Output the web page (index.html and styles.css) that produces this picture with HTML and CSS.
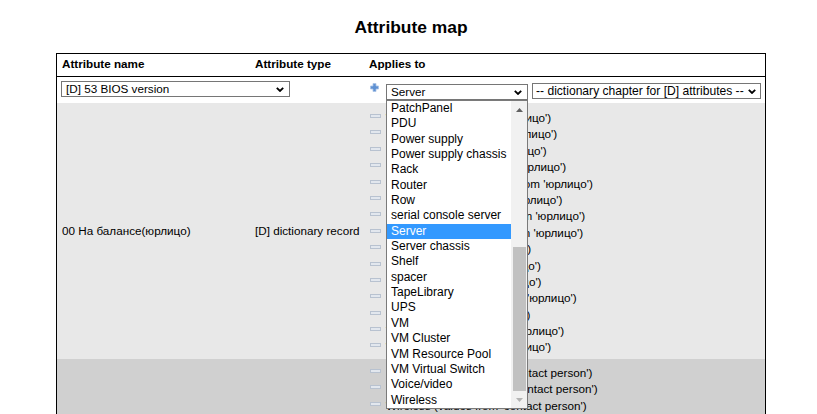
FILE: index.html
```html
<!DOCTYPE html>
<html>
<head>
<meta charset="utf-8">
<title>Attribute map</title>
<link rel="stylesheet" href="styles.css">
</head>
<body>
<div class="page">
  <h1 class="title">Attribute map</h1>
  <table class="attrmap">
    <colgroup><col class="c1"><col class="c2"><col class="c3"></colgroup>
    <thead>
      <tr><th>Attribute name</th><th>Attribute type</th><th>Applies to</th></tr>
    </thead>
    <tbody>
      <tr class="addrow">
        <td colspan="2">
          <div class="select sel-attr"><span>[D] 53 BIOS version</span><svg class="chev" width="8" height="5" viewBox="0 0 8 5"><polyline points="0.8,0.8 4,4 7.2,0.8" fill="none" stroke="#000" stroke-width="1.8"/></svg></div>
        </td>
        <td class="addcell">
          <div class="addline">
            <svg class="plus" width="9" height="9" viewBox="0 0 9 9"><path d="M3 0.5h3v2.5h2.5v3h-2.5v2.5h-3v-2.5h-2.5v-3h2.5z" fill="#5f91d2" stroke="#a9c3e6" stroke-width="0.8"/></svg>
            <div class="combo">
              <div class="select sel-type"><span>Server</span><svg class="chev" width="8" height="5" viewBox="0 0 8 5"><polyline points="0.8,0.8 4,4 7.2,0.8" fill="none" stroke="#000" stroke-width="1.8"/></svg></div>
              <div class="listbox">
                <ul class="options">
                  <li>PatchPanel</li>
                  <li>PDU</li>
                  <li>Power supply</li>
                  <li>Power supply chassis</li>
                  <li>Rack</li>
                  <li>Router</li>
                  <li>Row</li>
                  <li>serial console server</li>
                  <li class="selected">Server</li>
                  <li>Server chassis</li>
                  <li>Shelf</li>
                  <li>spacer</li>
                  <li>TapeLibrary</li>
                  <li>UPS</li>
                  <li>VM</li>
                  <li>VM Cluster</li>
                  <li>VM Resource Pool</li>
                  <li>VM Virtual Switch</li>
                  <li>Voice/video</li>
                  <li>Wireless</li>
                </ul>
                <div class="scrollbar">
                  <div class="sb-btn"><svg width="7" height="4" viewBox="0 0 7 4"><path d="M0 4L3.5 0L7 4z" fill="#606060"/></svg></div>
                  <div class="sb-track"><div class="sb-thumb"></div></div>
                  <div class="sb-btn"><svg width="7" height="4" viewBox="0 0 7 4"><path d="M0 0L3.5 4L7 0z" fill="#b4b4b4"/></svg></div>
                </div>
              </div>
            </div>
            <div class="select sel-chapter"><span>-- dictionary chapter for [D] attributes --</span><svg class="chev" width="8" height="5" viewBox="0 0 8 5"><polyline points="0.8,0.8 4,4 7.2,0.8" fill="none" stroke="#000" stroke-width="1.8"/></svg></div>
          </div>
        </td>
      </tr>
      <tr class="band1">
        <td class="name">00 На балансе(юрлицо)</td>
        <td class="type">[D] dictionary record</td>
        <td class="applies">
          <div class="apl"><svg class="minus" width="11" height="4" viewBox="0 0 11 4"><rect x="0.5" y="0.5" width="10" height="3" fill="#e2e7ee" stroke="#b8c2d0"/></svg><span>Wireless (values from 'юрлицо')</span></div>
          <div class="apl"><svg class="minus" width="11" height="4" viewBox="0 0 11 4"><rect x="0.5" y="0.5" width="10" height="3" fill="#e2e7ee" stroke="#b8c2d0"/></svg><span>DiskArray (values from 'юрлицо')</span></div>
          <div class="apl"><svg class="minus" width="11" height="4" viewBox="0 0 11 4"><rect x="0.5" y="0.5" width="10" height="3" fill="#e2e7ee" stroke="#b8c2d0"/></svg><span>Firewall (values from 'юрлицо')</span></div>
          <div class="apl"><svg class="minus" width="11" height="4" viewBox="0 0 11 4"><rect x="0.5" y="0.5" width="10" height="3" fill="#e2e7ee" stroke="#b8c2d0"/></svg><span>PatchPanel (values from 'юрлицо')</span></div>
          <div class="apl"><svg class="minus" width="11" height="4" viewBox="0 0 11 4"><rect x="0.5" y="0.5" width="10" height="3" fill="#e2e7ee" stroke="#b8c2d0"/></svg><span>Network security (values from 'юрлицо')</span></div>
          <div class="apl"><svg class="minus" width="11" height="4" viewBox="0 0 11 4"><rect x="0.5" y="0.5" width="10" height="3" fill="#e2e7ee" stroke="#b8c2d0"/></svg><span>Patch cord (values from 'юрлицо')</span></div>
          <div class="apl"><svg class="minus" width="11" height="4" viewBox="0 0 11 4"><rect x="0.5" y="0.5" width="10" height="3" fill="#e2e7ee" stroke="#b8c2d0"/></svg><span>Console server (values from 'юрлицо')</span></div>
          <div class="apl"><svg class="minus" width="11" height="4" viewBox="0 0 11 4"><rect x="0.5" y="0.5" width="10" height="3" fill="#e2e7ee" stroke="#b8c2d0"/></svg><span>Server chassis (values from 'юрлицо')</span></div>
          <div class="apl"><svg class="minus" width="11" height="4" viewBox="0 0 11 4"><rect x="0.5" y="0.5" width="10" height="3" fill="#e2e7ee" stroke="#b8c2d0"/></svg><span>PDU (values from 'юрлицо')</span></div>
          <div class="apl"><svg class="minus" width="11" height="4" viewBox="0 0 11 4"><rect x="0.5" y="0.5" width="10" height="3" fill="#e2e7ee" stroke="#b8c2d0"/></svg><span>Switch (values from 'юрлицо')</span></div>
          <div class="apl"><svg class="minus" width="11" height="4" viewBox="0 0 11 4"><rect x="0.5" y="0.5" width="10" height="3" fill="#e2e7ee" stroke="#b8c2d0"/></svg><span>Router (values from 'юрлицо')</span></div>
          <div class="apl"><svg class="minus" width="11" height="4" viewBox="0 0 11 4"><rect x="0.5" y="0.5" width="10" height="3" fill="#e2e7ee" stroke="#b8c2d0"/></svg><span>Power supply (values from 'юрлицо')</span></div>
          <div class="apl"><svg class="minus" width="11" height="4" viewBox="0 0 11 4"><rect x="0.5" y="0.5" width="10" height="3" fill="#e2e7ee" stroke="#b8c2d0"/></svg><span>UPS (values from 'юрлицо')</span></div>
          <div class="apl"><svg class="minus" width="11" height="4" viewBox="0 0 11 4"><rect x="0.5" y="0.5" width="10" height="3" fill="#e2e7ee" stroke="#b8c2d0"/></svg><span>VM Cluster (values from 'юрлицо')</span></div>
          <div class="apl"><svg class="minus" width="11" height="4" viewBox="0 0 11 4"><rect x="0.5" y="0.5" width="10" height="3" fill="#e2e7ee" stroke="#b8c2d0"/></svg><span>Wireless (values from 'юрлицо')</span></div>
        </td>
      </tr>
      <tr class="band2">
        <td class="name">01 Контактное лицо</td>
        <td class="type">[D] dictionary record</td>
        <td class="applies">
          <div class="apl"><svg class="minus" width="11" height="4" viewBox="0 0 11 4"><rect x="0.5" y="0.5" width="10" height="3" fill="#e2e7ee" stroke="#b8c2d0"/></svg><span>DiskArray (values from 'contact person')</span></div>
          <div class="apl"><svg class="minus" width="11" height="4" viewBox="0 0 11 4"><rect x="0.5" y="0.5" width="10" height="3" fill="#e2e7ee" stroke="#b8c2d0"/></svg><span>Patch cord (values from 'contact person')</span></div>
          <div class="apl"><svg class="minus" width="11" height="4" viewBox="0 0 11 4"><rect x="0.5" y="0.5" width="10" height="3" fill="#e2e7ee" stroke="#b8c2d0"/></svg><span>Wireless (values from 'contact person')</span></div>
          <div class="apl"><svg class="minus" width="11" height="4" viewBox="0 0 11 4"><rect x="0.5" y="0.5" width="10" height="3" fill="#e2e7ee" stroke="#b8c2d0"/></svg><span>Server (values from 'contact person')</span></div>
          <div class="apl"><svg class="minus" width="11" height="4" viewBox="0 0 11 4"><rect x="0.5" y="0.5" width="10" height="3" fill="#e2e7ee" stroke="#b8c2d0"/></svg><span>Switch (values from 'contact person')</span></div>
          <div class="apl"><svg class="minus" width="11" height="4" viewBox="0 0 11 4"><rect x="0.5" y="0.5" width="10" height="3" fill="#e2e7ee" stroke="#b8c2d0"/></svg><span>Router (values from 'contact person')</span></div>
          <div class="apl"><svg class="minus" width="11" height="4" viewBox="0 0 11 4"><rect x="0.5" y="0.5" width="10" height="3" fill="#e2e7ee" stroke="#b8c2d0"/></svg><span>UPS (values from 'contact person')</span></div>
          <div class="apl"><svg class="minus" width="11" height="4" viewBox="0 0 11 4"><rect x="0.5" y="0.5" width="10" height="3" fill="#e2e7ee" stroke="#b8c2d0"/></svg><span>VM (values from 'contact person')</span></div>
        </td>
      </tr>
    </tbody>
  </table>
</div>
</body>
</html>
```

FILE: styles.css
```css
html, body {
  margin: 0;
  padding: 0;
  background: #fff;
  color: #000;
  font-family: "Liberation Sans", Arial, sans-serif;
}

.page {
  width: 710px;
  margin-left: 56px;
}

.title {
  margin: 0 0 16px 0;
  padding-top: 17px;
  font-size: 17.4px;
  line-height: 20px;
  font-weight: bold;
  text-align: center;
}

.attrmap {
  width: 710px;
  border: 1px solid #000;
  border-collapse: separate;
  border-spacing: 0;
  table-layout: fixed;
  font-size: 11.7px;
}

.c1 { width: 193px; }
.c2 { width: 114px; }
.c3 { width: 401px; }

.attrmap th {
  text-align: left;
  font-weight: bold;
  padding: 3px 5px 5px 5px;
  line-height: 14px;
  height: 14px;
  border-bottom: 1px solid #000;
  white-space: nowrap;
}

.attrmap td {
  padding: 0 5px;
  white-space: nowrap;
}

.addrow td {
  height: 26px;
  padding: 4px 0 0 4px;
  vertical-align: top;
  box-sizing: border-box;
}

.addrow td.addcell {
  padding-left: 6px;
}

.addline {
  display: flex;
  align-items: flex-start;
}

.plus {
  display: block;
  margin-top: 2px;
  flex: none;
}

.select {
  box-sizing: border-box;
  height: 16px;
  border: 1px solid #767676;
  background: #fff;
  display: flex;
  align-items: center;
  justify-content: space-between;
  padding: 0 5px 0 4px;
  font-size: 11.7px;
  line-height: 14px;
  white-space: nowrap;
  overflow: hidden;
}

.chev {
  display: block;
  flex: none;
}

.sel-attr {
  width: 229px;
}

.combo {
  position: relative;
  margin-left: 7px;
  margin-top: 3px;
}

.sel-type {
  width: 142px;
}

.sel-chapter {
  width: 229px;
  margin-left: 4px;
  margin-top: 2px;
  padding-left: 3px;
  padding-right: 4px;
  font-size: 12.1px;
}

.listbox {
  position: absolute;
  top: 100%;
  left: 0;
  width: 142px;
  height: 309px;
  box-sizing: border-box;
  border: 1px solid #7a7a7a;
  background: #fff;
  display: flex;
  z-index: 5;
}

.options {
  list-style: none;
  margin: 0;
  padding: 0;
  flex: 1;
  font-size: 12px;
}

.options li {
  height: 15.35px;
  line-height: 15.35px;
  padding-left: 4px;
  white-space: nowrap;
  color: #000;
}

.options li.selected {
  background: #3399ff;
  color: #fff;
}

.scrollbar {
  width: 16px;
  flex: none;
  background: #f1f1f1;
  display: flex;
  flex-direction: column;
}

.sb-btn {
  height: 17px;
  flex: none;
  display: flex;
  align-items: center;
  justify-content: center;
}

.sb-btn svg {
  display: block;
}

.sb-track {
  flex: 1;
  display: flex;
  flex-direction: column;
  justify-content: flex-end;
  align-items: center;
}

.sb-thumb {
  width: 13px;
  height: 144px;
  background: #c1c1c1;
}

.band1 td {
  background: #e8e8e8;
}

.band2 td {
  background: #d0d0d0;
}

td.name,
td.type {
  vertical-align: middle;
}

td.applies {
  vertical-align: top;
  padding: 7px 0 3px 6px;
}

.band2 td.applies {
  padding-top: 6px;
}

.apl {
  display: flex;
  align-items: flex-start;
  gap: 5px;
  height: 16.4px;
  line-height: 16.4px;
  white-space: nowrap;
}

.minus {
  display: block;
  flex: none;
  margin-top: 4px;
}
```
